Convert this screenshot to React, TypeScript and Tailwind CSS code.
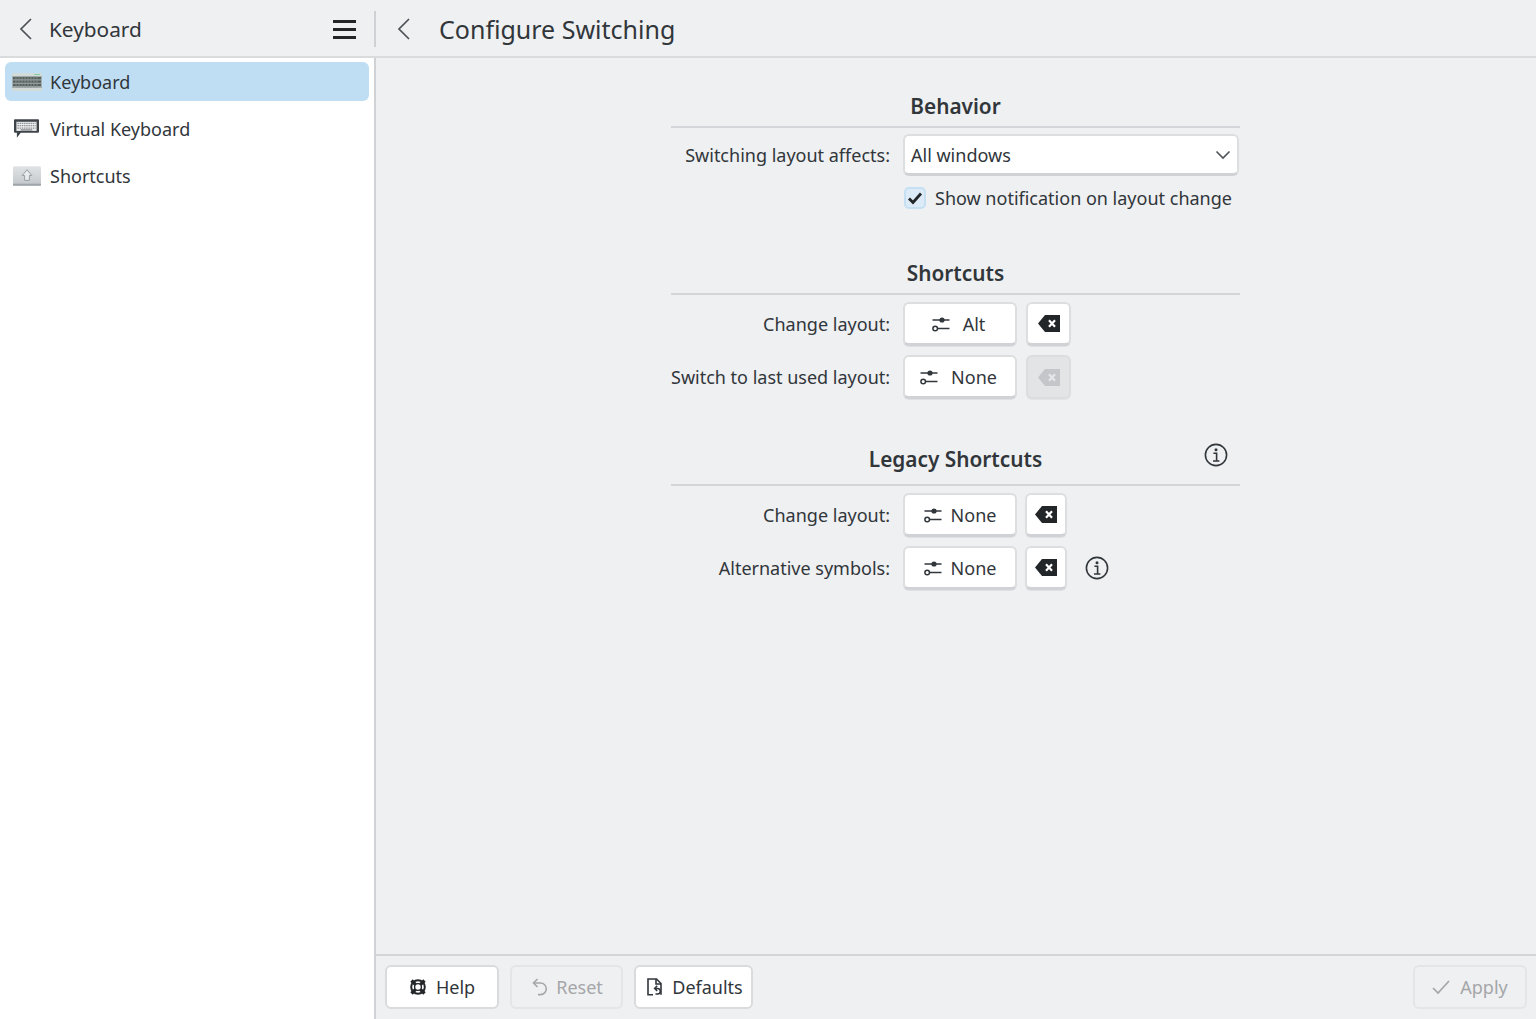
import React from 'react';

const ink = '#31363b';

const ChevronLeft: React.FC = () => (
  <svg width="16" height="24" viewBox="0 0 16 24" fill="none" stroke="#4d5257" strokeWidth="1.7">
    <path d="M13 2 L3 12 L13 22" />
  </svg>
);

const Sliders: React.FC = () => (
  <svg width="18" height="16" viewBox="0 0 18 16" fill="none" stroke="#31363b" strokeWidth="1.5">
    <path d="M0.5 4 H17.5" />
    <circle cx="10" cy="4" r="2.6" fill="#31363b" stroke="none" />
    <path d="M6 12.5 H17.5" />
    <circle cx="3.2" cy="12.5" r="2.3" fill="#fff" />
  </svg>
);

const ClearIcon: React.FC<{ disabled?: boolean }> = ({ disabled }) => (
  <svg width="22" height="17" viewBox="0 0 22 17">
    <path d="M7 0 H22 V17 H7 L0 8.5 Z" fill={disabled ? '#c4c6c9' : '#232629'} />
    <path d="M11 5.2 L17 11.8 M17 5.2 L11 11.8" stroke={disabled ? '#e6e7e9' : '#fff'} strokeWidth="2.2" />
  </svg>
);

const InfoIcon: React.FC = () => (
  <svg width="24" height="24" viewBox="0 0 24 24" fill="none" stroke="#31363b" strokeWidth="1.6">
    <circle cx="12" cy="12" r="10.6" />
    <circle cx="12" cy="6.8" r="1.5" fill="#31363b" stroke="none" />
    <path d="M9.4 10.2 H12.6 V18 M9 18 H15.4" />
  </svg>
);

const KeyboardGreen: React.FC = () => (
  <svg width="30" height="18" viewBox="0 0 30 18">
    <rect x="0" y="0" width="30" height="18" rx="1" fill="#d3dbd9" />
    <rect x="0" y="3" width="30" height="12" fill="#a4aead" />
    <g fill="#56615f">
      {[0, 1, 2].map((r) => (
        <rect key={r} x="1" y={4 + r * 3.4} width="28" height="2.4" />
      ))}
    </g>
    <path d="M4 3 V15 M7 3 V15 M10 3 V15 M13 3 V15 M16 3 V15 M19 3 V15 M22 3 V15 M25 3 V15" stroke="#8d9896" strokeWidth="0.8" />
    <rect x="22" y="1" width="6" height="1" fill="#7fd0a0" />
  </svg>
);

const KeyboardVirtual: React.FC = () => (
  <svg width="25" height="19" viewBox="0 0 26 19">
    <path d="M1 0 H25 a1 1 0 0 1 1 1 V13 a1 1 0 0 1 -1 1 H7 L3 19 V14 H1 a1 1 0 0 1 -1 -1 V1 a1 1 0 0 1 1 -1 Z" fill="#3f4449" />
    <rect x="2.5" y="2.5" width="21" height="9.5" fill="#eceded" />
    <path d="M3.5 4.2 H22.5 M3.5 6.6 H22.5 M3.5 9 H22.5" stroke="#8f9499" strokeWidth="1.3" strokeDasharray="1.6 0.7" />
    <path d="M7 11 H19" stroke="#5f6469" strokeWidth="1" />
  </svg>
);

const KeyShift: React.FC = () => (
  <svg width="28" height="20" viewBox="0 0 29 20">
    <defs>
      <linearGradient id="keycap" x1="0" y1="0" x2="0" y2="1">
        <stop offset="0" stopColor="#e0e3e5" />
        <stop offset="1" stopColor="#c2c7cb" />
      </linearGradient>
    </defs>
    <rect width="29" height="20" rx="1.5" fill="url(#keycap)" />
    <rect y="18" width="29" height="2" fill="#9fa4a8" />
    <path d="M14.5 3.5 L19.5 9.5 H17 V14.5 H12 V9.5 H9.5 Z" fill="#e9ebec" stroke="#989da1" strokeWidth="1" />
  </svg>
);

const HelpIcon: React.FC = () => (
  <svg width="18" height="18" viewBox="0 0 18 18" fill="none" stroke="#232629">
    <circle cx="9" cy="9" r="6.8" strokeWidth="2" />
    <circle cx="9" cy="9" r="3.4" strokeWidth="1.4" />
    <path d="M2.5 2.5 L6.6 6.6 M15.5 2.5 L11.4 6.6 M2.5 15.5 L6.6 11.4 M15.5 15.5 L11.4 11.4" strokeWidth="3.4" />
  </svg>
);

const ResetIcon: React.FC = () => (
  <svg width="16" height="18" viewBox="0 0 16 18" fill="none" stroke="#a4a6a9" strokeWidth="1.6">
    <path d="M5.5 1 L1.5 5 L5.5 9" />
    <path d="M2 5 H8.5 a5.8 5.8 0 0 1 0 11.6 H6" />
  </svg>
);

const DefaultsIcon: React.FC = () => (
  <svg width="15" height="18" viewBox="0 0 15 18" fill="none" stroke="#31363b" strokeWidth="1.6">
    <path d="M6 16.8 H1 V1 H9.5 L14 5.5 V16.8" />
    <path d="M9 1 V6 H14" />
    <path d="M10.2 7.8 L7.6 10.4 L10.2 13 M8 10.4 H10.5 a2.6 2.6 0 0 1 0 5.6 H8.5" strokeWidth="1.5" />
  </svg>
);

const CheckIcon: React.FC = () => (
  <svg width="18" height="16" viewBox="0 0 18 16" fill="none" stroke="#a4a6a9" strokeWidth="1.7">
    <path d="M1 9 L6 14 L17 2" />
  </svg>
);

const SectionTitle: React.FC<{ title: string; info?: boolean; className: string }> = ({ title, info, className }) => (
  <div className={`grid grid-cols-[1fr_auto_1fr] items-center border-b-2 border-[#d3d5d8] ${className}`}>
    <span />
    <h2 className="text-[20.8px] font-semibold leading-[28px] text-[#31363b]">{title}</h2>
    {info ? (
      <span className="justify-self-end mr-[12px] mb-[8px]">
        <InfoIcon />
      </span>
    ) : (
      <span />
    )}
  </div>
);

const Row: React.FC<{ label: string; className: string; children: React.ReactNode }> = ({ label, className, children }) => (
  <div className={`flex items-center ${className}`}>
    <span className="w-[219px] shrink-0 text-right text-[#31363b] whitespace-nowrap">{label}</span>
    <div className="ml-[13px] flex items-center">{children}</div>
  </div>
);

const KeyButton: React.FC<{ text: string; gap: string }> = ({ text, gap }) => (
  <button className={`w-[114px] h-[44px] flex items-center justify-center ${gap} bg-white rounded-[6px] border-2 border-[#dcdee0] border-b-[3px] border-b-[#d0d2d5] shadow-[0_1px_0_#dfe0e3] text-[#31363b]`}>
    <Sliders />
    <span>{text}</span>
  </button>
);

const ClearButton: React.FC<{ disabled?: boolean; className: string }> = ({ disabled, className }) => (
  <button
    className={`${className} h-[44px] flex items-center justify-center rounded-[6px] border-2 ${
      disabled
        ? 'bg-[#e3e4e6] border-[#dcdde0] shadow-[0_1px_0_#e3e4e6]'
        : 'bg-white border-[#dcdee0] border-b-[3px] border-b-[#d0d2d5] shadow-[0_1px_0_#dfe0e3]'
    }`}
  >
    <ClearIcon disabled={disabled} />
  </button>
);

const FooterButton: React.FC<{ icon: React.ReactNode; text: string; disabled?: boolean; className: string }> = ({
  icon,
  text,
  disabled,
  className,
}) => (
  <button
    className={`h-[44px] flex items-center justify-center rounded-[6px] border-2 ${className} ${
      disabled ? 'bg-[#eff0f1] border-[#e4e5e7] text-[#a4a6a9]' : 'bg-white border-[#d9dbdd] text-[#31363b]'
    }`}
  >
    {icon}
    <span>{text}</span>
  </button>
);

const SidebarItem: React.FC<{ icon: React.ReactNode; label: string; active?: boolean }> = ({ icon, label, active }) => (
  <div className={`h-[39px] mx-[5px] flex items-center rounded-[6px] ${active ? 'bg-[#bfdef4]' : ''}`}>
    <span className="w-[45px] flex items-center justify-center shrink-0 pr-[2px]">{icon}</span>
    <span className="text-[#31363b]">{label}</span>
  </div>
);

const App: React.FC = () => {
  return (
    <div
      className="w-[1536px] h-[1019px] flex flex-col overflow-hidden bg-[#eff0f1] text-[18px] leading-[28px]"
      style={{ fontFamily: '"Noto Sans", sans-serif', color: ink }}
    >
      <header className="h-[58px] shrink-0 flex items-center pt-[2px] border-b-2 border-[#d9dbdd]">
        <div className="w-[374px] shrink-0 flex items-center pl-[18px] pr-[18px]">
          <ChevronLeft />
          <span className="ml-[15px] text-[20.8px]">Keyboard</span>
          <div className="ml-auto flex flex-col gap-[5px]">
            <span className="block w-[23px] h-[3px] bg-[#232629]" />
            <span className="block w-[23px] h-[3px] bg-[#232629]" />
            <span className="block w-[23px] h-[3px] bg-[#232629]" />
          </div>
        </div>
        <div className="w-[2px] h-[36px] bg-[#cfd1d4]" />
        <div className="flex items-center pl-[20px]">
          <ChevronLeft />
          <h1 className="ml-[27px] text-[25px] leading-[34px]">Configure Switching</h1>
        </div>
      </header>

      <div className="flex-1 flex min-h-0">
        <aside className="w-[376px] shrink-0 bg-white border-r-2 border-[#d0d2d5] pt-[4px] flex flex-col gap-[8px]">
          <SidebarItem icon={<KeyboardGreen />} label="Keyboard" active />
          <SidebarItem icon={<KeyboardVirtual />} label="Virtual Keyboard" />
          <SidebarItem icon={<KeyShift />} label="Shortcuts" />
        </aside>

        <main className="flex-1 flex flex-col min-w-0">
          <div className="flex-1 min-h-0 pr-[1px]">
            <div className="w-[569px] mx-auto pt-[34px]">
              <SectionTitle title="Behavior" className="pb-[6px]" />
              <Row label="Switching layout affects:" className="mt-[6px]">
                <div className="w-[336px] h-[42px] flex items-center justify-between pl-[6px] pr-[6px] bg-white rounded-[6px] border-2 border-[#dcdee0] border-b-[3px] border-b-[#d0d2d5]">
                  <span>All windows</span>
                  <svg width="16" height="10" viewBox="0 0 16 10" fill="none" stroke="#4d5257" strokeWidth="1.6">
                    <path d="M1.5 1.5 L8 8 L14.5 1.5" />
                  </svg>
                </div>
              </Row>
              <div className="ml-[233px] mt-[8px] flex items-center">
                <span className="w-[22px] h-[22px] flex items-center justify-center bg-[#dcebf7] border-2 border-[#c5e0f3] rounded-[5px]">
                  <svg width="16" height="14" viewBox="0 0 16 14" fill="none" stroke="#232629" strokeWidth="2.8">
                    <path d="M2 7.5 L6 11.5 L14 2.5" />
                  </svg>
                </span>
                <span className="ml-[9px] whitespace-nowrap">Show notification on layout change</span>
              </div>

              <SectionTitle title="Shortcuts" className="mt-[47px] pb-[6px]" />
              <Row label="Change layout:" className="mt-[7px]">
                <KeyButton text="Alt" gap="gap-[13px] pr-[3px]" />
                <ClearButton className="w-[45px] ml-[9px]" />
              </Row>
              <Row label="Switch to last used layout:" className="mt-[9px]">
                <KeyButton text="None" gap="gap-[13px] pr-[3px]" />
                <ClearButton className="w-[45px] ml-[9px]" disabled />
              </Row>

              <SectionTitle title="Legacy Shortcuts" info className="mt-[44px] pb-[9px]" />
              <Row label="Change layout:" className="mt-[7px]">
                <KeyButton text="None" gap="gap-[9px]" />
                <ClearButton className="w-[42px] ml-[8px]" />
              </Row>
              <Row label="Alternative symbols:" className="mt-[9px]">
                <KeyButton text="None" gap="gap-[9px]" />
                <ClearButton className="w-[42px] ml-[8px]" />
                <span className="ml-[18px]">
                  <InfoIcon />
                </span>
              </Row>
            </div>
          </div>

          <footer className="h-[65px] shrink-0 flex items-center border-t-2 border-[#d3d5d8] pl-[9px] pr-[9px] pb-[2px]">
            <FooterButton icon={<HelpIcon />} text="Help" className="w-[114px] gap-[9px]" />
            <FooterButton icon={<ResetIcon />} text="Reset" disabled className="w-[113px] ml-[11px] gap-[8px] pl-[2px]" />
            <FooterButton icon={<DefaultsIcon />} text="Defaults" className="w-[119px] ml-[11px] gap-[10px] pl-[3px]" />
            <FooterButton icon={<CheckIcon />} text="Apply" disabled className="w-[114px] ml-auto gap-[10px]" />
          </footer>
        </main>
      </div>
    </div>
  );
};

export default App;
